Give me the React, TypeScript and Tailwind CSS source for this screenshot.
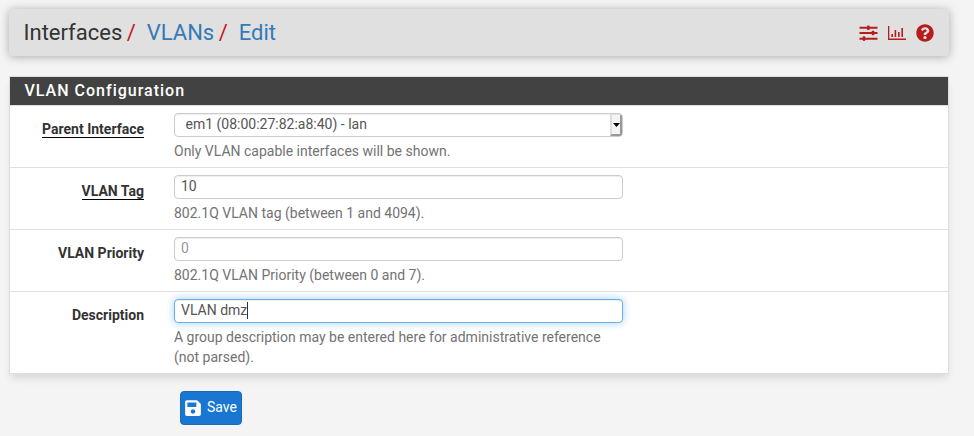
import type { ReactNode } from "react";
import { FaQuestionCircle, FaSave } from "react-icons/fa";

const field =
  "flex h-6 w-[449px] rounded-[4px] border bg-white pl-[6px] text-[14px] leading-[20px]";
const plain = "border-[#cccccc] shadow-[inset_0_1px_1px_rgba(0,0,0,0.075)]";

function SlidersIcon() {
  return (
    <svg width="19" height="16" viewBox="0 0 19 16" fill="#b71c1c">
      <path d="M.5 1.7h18v2H.5zM.5 7h18v2H.5zM.5 12.7h18v2H.5z" />
      <rect x="8" y="0.4" width="2.6" height="4.6" rx=".8" />
      <rect x="12.7" y="5.7" width="2.6" height="4.6" rx=".8" />
      <rect x="3.7" y="11.3" width="2.6" height="4.6" rx=".8" />
    </svg>
  );
}

function ChartIcon() {
  return (
    <svg width="18" height="14" viewBox="0 0 18 14" fill="#b71c1c">
      <path d="M0 0h1.3v12.6H18V14H0zM3.4 8h1.6v3H3.4zM6.6 4h1.6v7H6.6zM10 6h1.6v5H10zM13.4 2H15v9h-1.6z" />
    </svg>
  );
}

function Row({
  label,
  required,
  help,
  last,
  children,
}: {
  label: string;
  required?: boolean;
  help: string;
  last?: boolean;
  children: ReactNode;
}) {
  return (
    <div
      className={`flex pt-[7px] ${last ? "h-[81px]" : "h-[62px] border-b border-[#e0e0e0]"}`}
    >
      <div className="flex w-[134px] justify-end pt-[6px] text-[14px] font-bold leading-5 text-[#333333]">
        <span className={required ? "h-[19px] border-b border-black" : "h-5"}>{label}</span>
      </div>
      <div className="ml-[30px] w-[449px]">
        {children}
        <p className="mt-1 text-[14px] leading-5 text-[#737373]">{help}</p>
      </div>
    </div>
  );
}

export default function App() {
  return (
    <div className="h-[436px] w-[974px] overflow-hidden bg-[#f4f4f4] pl-[9px] pt-[9px] font-['Roboto',sans-serif]">
      <header className="flex h-[47px] w-[940px] items-center rounded-[4px] bg-[#e0e0e0] pl-[14.5px] pr-[16px] shadow-[0_1px_10px_rgba(0,0,0,0.3)]">
        <nav className="flex text-[22px] leading-[24px] text-[#337ab7]">
          <span className="text-[#333333]">Interfaces</span>
          <span className="w-[24.5px] pl-[4.5px] text-[#c9151b]">/</span>
          <span>VLANs</span>
          <span className="w-[24.5px] pl-[4.5px] text-[#c9151b]">/</span>
          <span>Edit</span>
        </nav>
        <div className="-mr-px ml-auto flex items-center">
          <SlidersIcon />
          <span className="ml-[10px] mr-px">
            <ChartIcon />
          </span>
          <FaQuestionCircle className="ml-[9px] text-[#b71c1c]" size={18} />
        </div>
      </header>

      <section className="mt-5 w-[940px] border border-[#dddddd] bg-white shadow-[0_6px_8px_-2px_rgba(0,0,0,0.12)]">
        <h2 className="h-[29px] border-b border-[#dddddd] bg-[#424242] pl-[14.5px] text-[16px] font-medium leading-[27px] tracking-[1px] text-white">
          VLAN Configuration
        </h2>
        <Row label="Parent Interface" required help="Only VLAN capable interfaces will be shown.">
          <div className={`${field} ${plain} overflow-hidden text-[#555555]`}>
            <span className="pl-[4.5px]">em1 (08:00:27:82:a8:40) - lan</span>
            <span className="ml-auto flex h-[22px] w-[12px] items-center justify-center border-b-2 border-l-2 border-r-2 border-t border-b-[#999999] border-l-[#dddddd] border-r-[#999999] border-t-[#dddddd] bg-[#f4f4f4]">
              <svg className="shrink-0" width="7" height="4" viewBox="0 0 7 4">
                <path d="M0 0h7L3.5 4z" />
              </svg>
            </span>
          </div>
        </Row>
        <Row label="VLAN Tag" required help="802.1Q VLAN tag (between 1 and 4094).">
          <div className={`${field} ${plain} text-[#555555]`}>10</div>
        </Row>
        <Row label="VLAN Priority" help="802.1Q VLAN Priority (between 0 and 7).">
          <div className={`${field} ${plain} text-[#999999]`}>0</div>
        </Row>
        <Row
          label="Description"
          last
          help="A group description may be entered here for administrative reference (not parsed)."
        >
          <div
            className={`${field} border-[#66afe9] text-[#555555] shadow-[inset_0_1px_1px_rgba(0,0,0,0.075),0_0_8px_rgba(102,175,233,0.6)]`}
          >
            <span>VLAN dmz</span>
            <span className="mt-[2px] h-[17px] w-px bg-[#333333]" />
          </div>
        </Row>
      </section>

      <button className="ml-[171px] mt-[17px] flex h-[34px] w-[62px] items-center rounded-[4px] border border-[#1c69b5] bg-[#1976d2] pb-px pl-[3px] text-[14px] leading-5 text-white">
        <FaSave size={18} />
        <span className="ml-[5px] pb-px">Save</span>
      </button>
    </div>
  );
}
